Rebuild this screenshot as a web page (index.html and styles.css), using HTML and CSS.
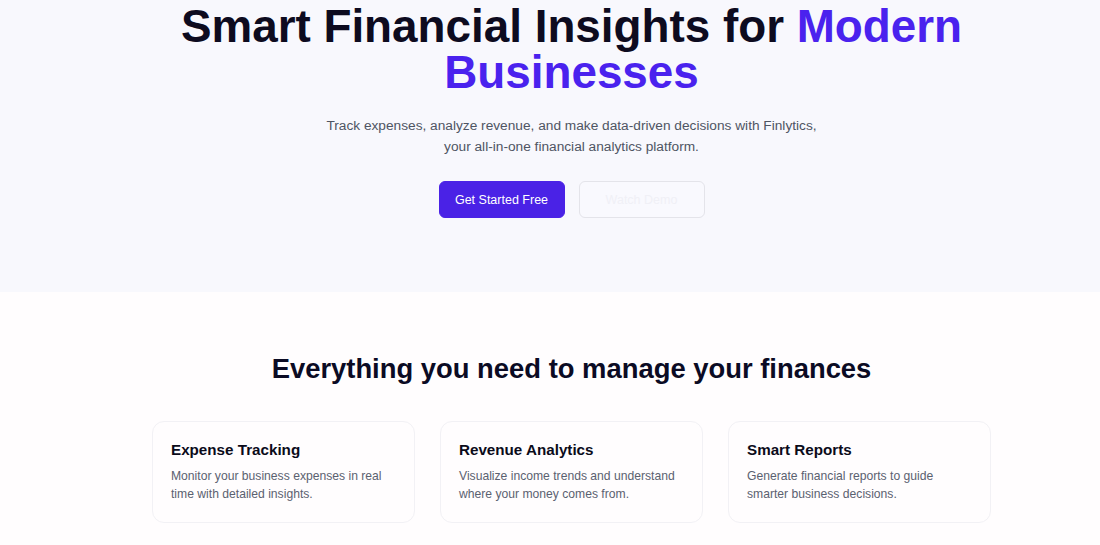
FILE: index.html
```html
<!DOCTYPE html>
<html lang="en">
<head>
<meta charset="utf-8">
<title>Finlytics</title>
<link rel="stylesheet" href="styles.css">
</head>
<body>
<section class="hero">
  <div class="inner">
    <h1 class="hero-title">Smart Financial Insights for <span class="accent">Modern Businesses</span></h1>
    <p class="hero-sub">Track expenses, analyze revenue, and make data-driven decisions with Finlytics,<br>your all-in-one financial analytics platform.</p>
    <div class="actions">
      <a class="btn btn-primary" href="#">Get Started Free</a>
      <a class="btn btn-ghost" href="#">Watch Demo</a>
    </div>
  </div>
</section>
<section class="features">
  <div class="inner">
    <h2 class="features-title">Everything you need to manage your finances</h2>
    <div class="cards">
      <div class="card">
        <h3>Expense Tracking</h3>
        <p>Monitor your business expenses in real time with detailed insights.</p>
      </div>
      <div class="card">
        <h3>Revenue Analytics</h3>
        <p>Visualize income trends and understand where your money comes from.</p>
      </div>
      <div class="card">
        <h3>Smart Reports</h3>
        <p>Generate financial reports to guide smarter business decisions.</p>
      </div>
    </div>
  </div>
</section>
</body>
</html>
```
FILE: styles.css
```css
* { box-sizing: border-box; }
html, body {
  margin: 0;
  padding: 0;
  background: #fffdfe;
  font-family: "Liberation Sans", Arial, sans-serif;
  overflow: hidden;
}
.inner {
  padding-left: 43px;
  display: flex;
  flex-direction: column;
  align-items: center;
}
.hero {
  background: #f8f8fd;
  height: 292px;
}
.hero-title {
  margin: 0;
  margin-top: 4px;
  font-size: 45.8px;
  line-height: 46px;
  font-weight: 700;
  color: #0d0b1f;
  text-align: center;
  width: 840px;
}
.accent { color: #4a22ee; }
.hero-sub {
  margin: 19px 0 0;
  font-size: 13.7px;
  line-height: 21px;
  color: #4f5563;
  text-align: center;
}
.actions {
  display: flex;
  gap: 14px;
  margin-top: 24px;
}
.btn {
  display: flex;
  align-items: center;
  justify-content: center;
  width: 126px;
  height: 37px;
  border-radius: 6px;
  font-size: 12.5px;
  text-decoration: none;
}
.btn-primary {
  background: #4a22e6;
  color: #ffffff;
  border: 1px solid #4a22e6;
}
.btn-ghost {
  background: #f9f9fe;
  color: #f0f0f6;
  border: 1px solid #e4e4ea;
}
.features-title {
  margin: 60px 0 0;
  font-size: 27.4px;
  line-height: 34px;
  font-weight: 700;
  color: #0b0b24;
}
.cards {
  display: grid;
  grid-template-columns: repeat(3, 263px);
  gap: 25px;
  margin-top: 35px;
}
.card {
  background: #fffdfe;
  border: 1px solid #f2f1f5;
  border-radius: 12px;
  height: 102px;
  padding: 19px 18px 0 18px;
}
.card h3 {
  margin: 0;
  font-size: 15.2px;
  line-height: 18px;
  font-weight: 700;
  color: #0b0b1a;
}
.card p {
  margin: 8px 0 0;
  font-size: 12.15px;
  line-height: 18px;
  color: #5b6170;
}
```
